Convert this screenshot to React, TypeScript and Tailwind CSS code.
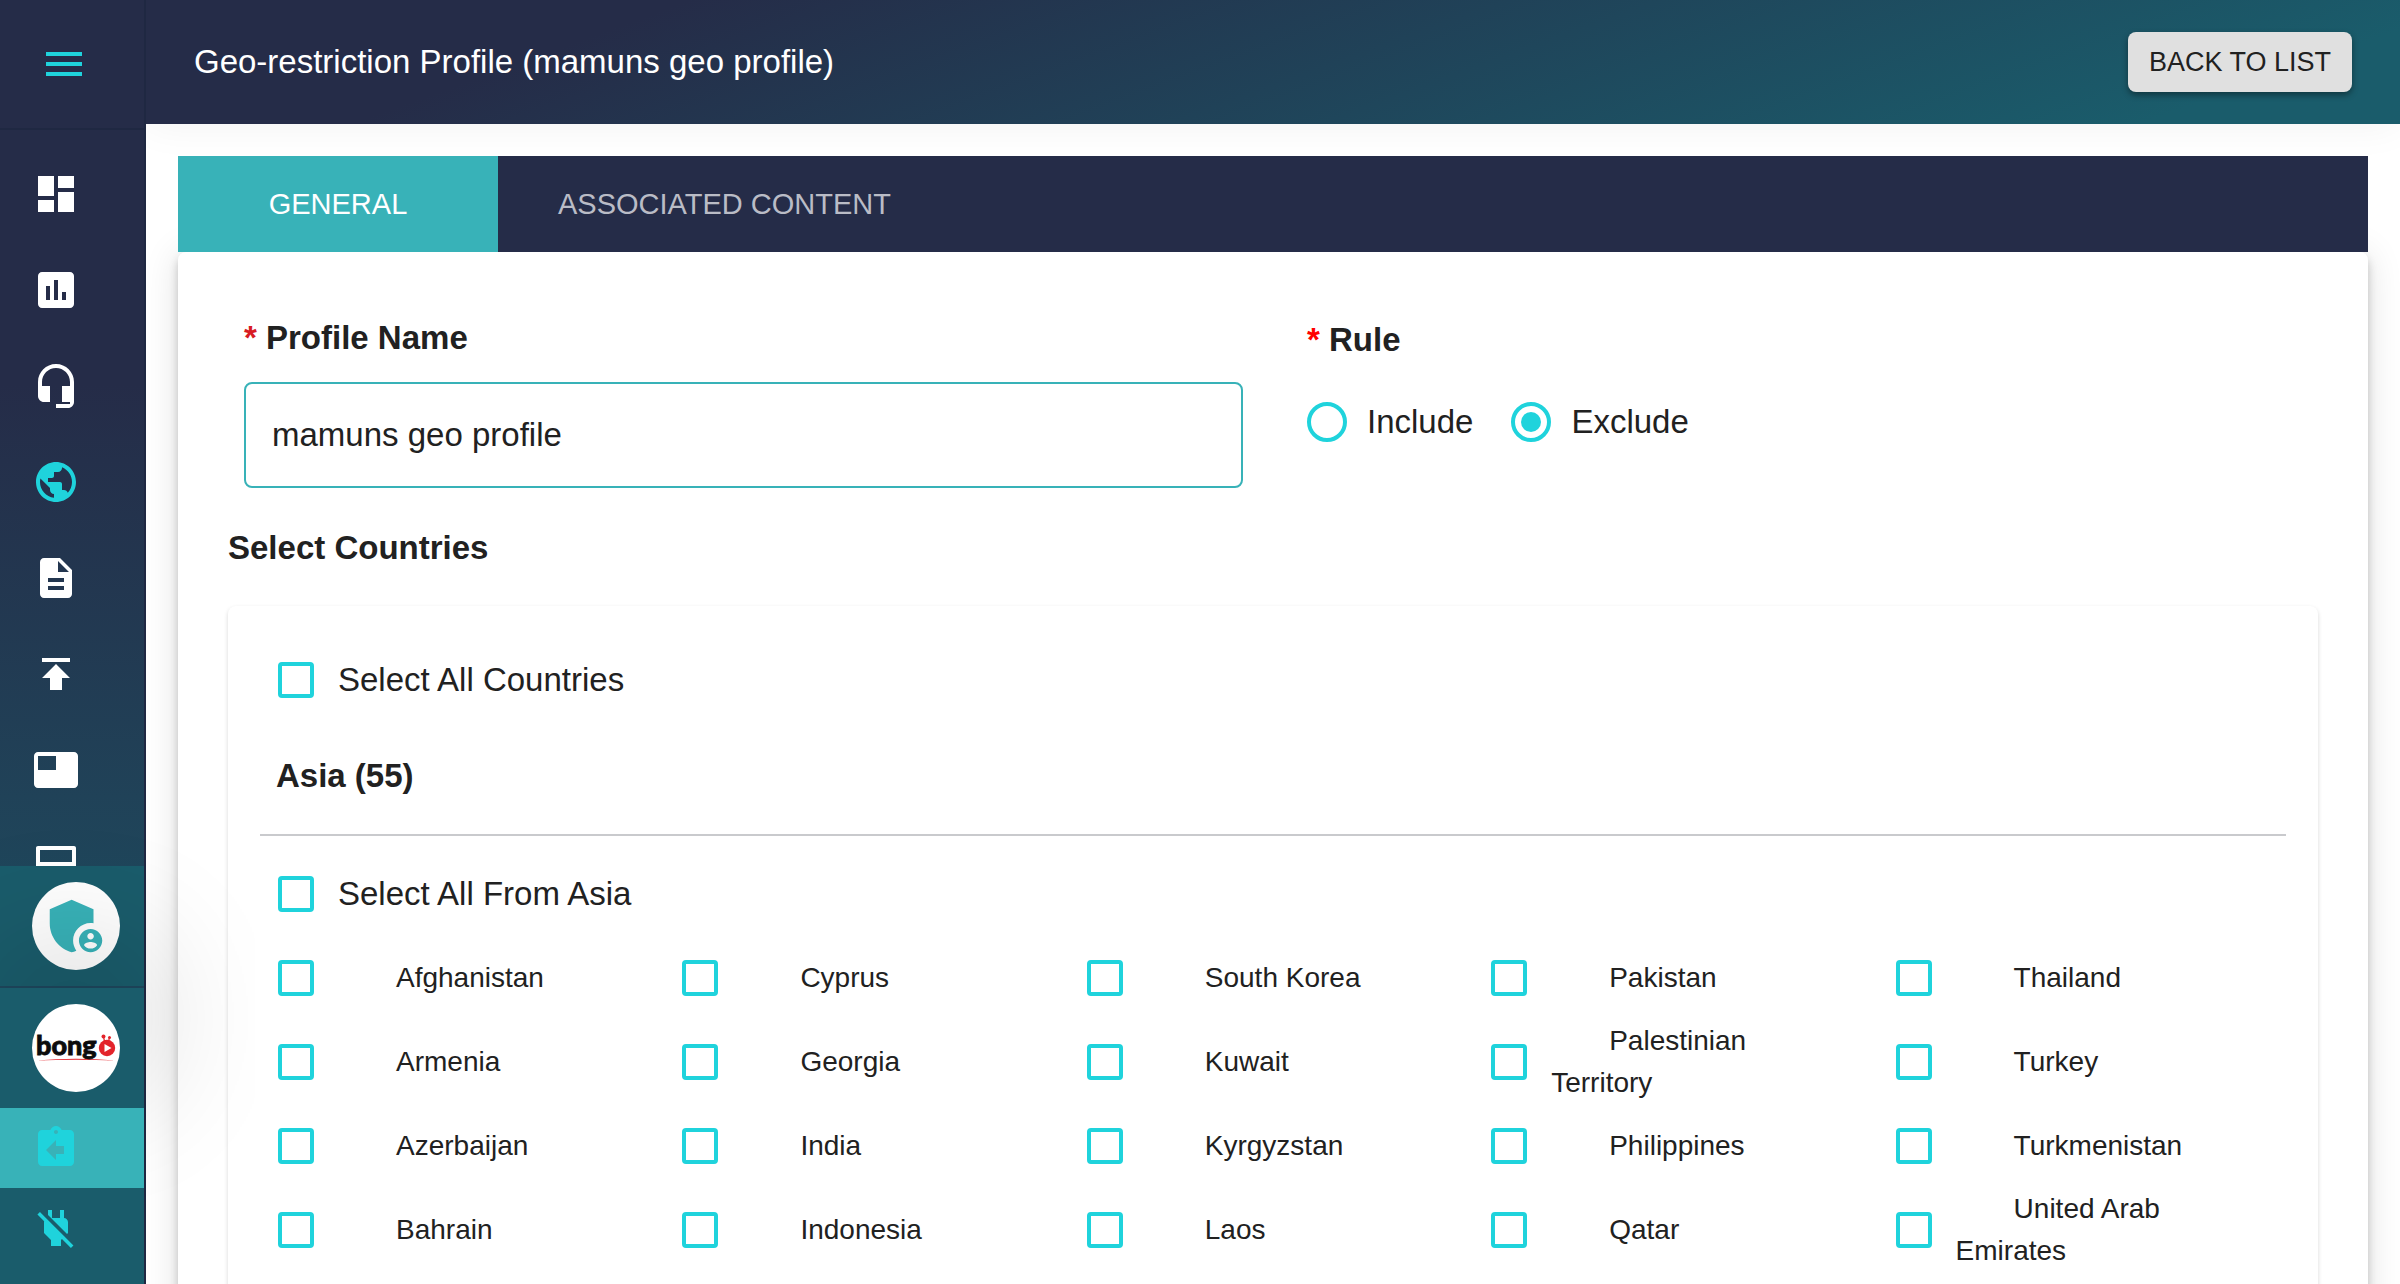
import React, { useState } from "react";

const ICONS = {
  menu: "M3 18h18v-2H3v2zm0-5h18v-2H3v2zm0-7v2h18V6H3z",
  dashboard: "M3 13h8V3H3v10zm0 8h8v-6H3v6zm10 0h8V11h-8v10zm0-18v6h8V3h-8z",
  assessment:
    "M19 3H5c-1.1 0-2 .9-2 2v14c0 1.1.9 2 2 2h14c1.1 0 2-.9 2-2V5c0-1.1-.9-2-2-2zM9 17H7v-7h2v7zm4 0h-2V7h2v10zm4 0h-2v-4h2v4z",
  headset:
    "M12 1c-4.97 0-9 4.03-9 9v7c0 1.66 1.34 3 3 3h3v-8H5v-2c0-3.87 3.13-7 7-7s7 3.13 7 7v2h-4v8h4v1h-7v2h6c1.66 0 3-1.34 3-3V10c0-4.97-4.03-9-9-9z",
  globe:
    "M12 2C6.48 2 2 6.48 2 12s4.48 10 10 10 10-4.48 10-10S17.52 2 12 2zm-1 17.93c-3.95-.49-7-3.85-7-7.93 0-.62.08-1.21.21-1.79L9 15v1c0 1.1.9 2 2 2v1.93zm6.9-2.54c-.26-.81-1-1.39-1.9-1.39h-1v-3c0-.55-.45-1-1-1H8v-2h2c.55 0 1-.45 1-1V7h2c1.1 0 2-.9 2-2v-.41c2.93 1.19 5 4.06 5 7.41 0 2.08-.8 3.97-2.1 5.39z",
  document:
    "M14 2H6c-1.1 0-1.99.9-1.99 2L4 20c0 1.1.89 2 1.99 2H18c1.1 0 2-.9 2-2V8l-6-6zm2 16H8v-2h8v2zm0-4H8v-2h8v2zm-3-5V3.5L18.5 9H13z",
  publish: "M5 4v2h14V4H5zm0 10h4v6h6v-6h4l-7-7-7 7z",
  featured:
    "M21 3H3c-1.1 0-2 .9-2 2v14c0 1.1.9 2 2 2h18c1.1 0 2-.9 2-2V5c0-1.1-.9-2-2-2zm-9 9H3V5h9v7z",
  panels:
    "M21 2H3c-.55 0-1 .45-1 1v9h20V3c0-.55-.45-1-1-1zm-1 8H4V4h16v6zM2 13v8c0 .55.45 1 1 1h18c.55 0 1-.45 1-1v-8H2zm18 7H4v-5h16v5z",
  shieldUser:
    "M17 11c.34 0 .67.04 1 .09V6.27L10.5 3 3 6.27v4.91c0 4.54 3.2 8.79 7.5 9.82.55-.13 1.08-.32 1.6-.55-.69-.98-1.1-2.17-1.1-3.45 0-3.31 2.69-6 6-6zM17 13c-2.21 0-4 1.79-4 4s1.79 4 4 4 4-1.79 4-4-1.79-4-4-4zm0 1.38c.62 0 1.12.51 1.12 1.12s-.51 1.12-1.12 1.12-1.12-.51-1.12-1.12.5-1.12 1.12-1.12zm0 5.37c-.93 0-1.74-.46-2.24-1.17.05-.72 1.51-1.08 2.24-1.08s2.19.36 2.24 1.08c-.5.71-1.31 1.17-2.24 1.17z",
  assignmentReturn:
    "M19 3h-4.18C14.4 1.84 13.3 1 12 1c-1.3 0-2.4.84-2.82 2H5c-1.1 0-2 .9-2 2v14c0 1.1.9 2 2 2h14c1.1 0 2-.9 2-2V5c0-1.1-.9-2-2-2zm-7 0c.55 0 1 .45 1 1s-.45 1-1 1-1-.45-1-1 .45-1 1-1zm4 12h-4v3l-5-5 5-5v3h4v4z",
  powerOff:
    "M18 14.49V9c0-1-1.01-2.01-2-2V3h-2v4h-4V3H8v2.48l9.51 9.5.49-.49zm-1.76 1.77L7.2 7.2l-.01.01L3.98 4 2.71 5.25l3.36 3.36C6.04 8.74 6 8.87 6 9v5.48L9.5 18v3h5v-3l.48-.48L19.45 22l1.26-1.28-4.47-4.46z",
};

type IconName = keyof typeof ICONS;

function Icon({ name, className = "size-12" }: { name: IconName; className?: string }) {
  return (
    <svg viewBox="0 0 24 24" className={className} fill="currentColor" aria-hidden="true">
      <path d={ICONS[name]} />
    </svg>
  );
}

function BongoLogo() {
  return (
    <svg viewBox="0 0 88 88" className="size-[88px]" role="img" aria-label="bongo">
      <path d="M4 56.500Q44 53 84 56.500Q44 55 4 56.500z" fill="#e3242b" />
      <text
        x="4"
        y="51"
        fontFamily="Lato, sans-serif"
        fontWeight="900"
        fontSize="27"
        fill="#0c0c0c"
        stroke="#0c0c0c"
        strokeWidth="0.800"
      >
        bong
      </text>
      <circle cx="75" cy="44" r="8.200" fill="#e3242b" />
      <path d="M72.500 40l7 4-7 4z" fill="#fff" />
      <circle cx="71.500" cy="32.500" r="2" fill="#e3242b" />
      <circle cx="77.500" cy="33.500" r="1.500" fill="#e3242b" />
      <path d="M71.500 33l1 4M77.500 34l-1 3" stroke="#e3242b" strokeWidth="1.200" />
    </svg>
  );
}

const NAV: { icon: IconName; label: string; active?: boolean }[] = [
  { icon: "dashboard", label: "Dashboard" },
  { icon: "assessment", label: "Reports" },
  { icon: "headset", label: "Support" },
  { icon: "globe", label: "Geo-restriction", active: true },
  { icon: "document", label: "Documents" },
  { icon: "publish", label: "Publish" },
  { icon: "featured", label: "Featured" },
  { icon: "panels", label: "Sections" },
];

function Sidebar() {
  return (
    <aside className="relative z-10 flex w-[146px] shrink-0 flex-col border-r-2 border-[#1f2842] bg-[linear-gradient(180deg,#252c48_30%,#1a5c6b_100%)]">
      <div className="flex h-[130px] shrink-0 items-center border-b-2 border-[#1f2842] pl-10">
        <button type="button" aria-label="Toggle menu" className="text-[#1fd3dc]">
          <Icon name="menu" />
        </button>
      </div>
      <nav className="min-h-0 flex-1 overflow-hidden pt-4">
        {NAV.map((item) => (
          <a
            key={item.icon}
            href="#"
            aria-label={item.label}
            className={
              item.active
                ? "flex h-24 items-center pl-8 text-[#1fd3dc]"
                : "flex h-24 items-center pl-8 text-white"
            }
          >
            <Icon name={item.icon} />
          </a>
        ))}
      </nav>
      <div className="shrink-0 bg-[#1a5c6b]">
        <div className="border-b-2 border-[#1e475d] py-4 pl-8">
          <button
            type="button"
            aria-label="Account"
            className="flex size-[88px] items-center justify-center rounded-full bg-white text-[#38b2b8]"
          >
            <Icon name="shieldUser" className="size-[70px]" />
          </button>
        </div>
        <div className="relative bg-[#1a5c6b] py-4 pl-8 shadow-[0_-30px_140px_rgba(0,0,0,0.2)]">
          <div className="size-[88px] overflow-hidden rounded-full bg-white">
            <BongoLogo />
          </div>
        </div>
        <div className="relative bg-[#1a5c6b] pb-4">
          <button
            type="button"
            aria-label="Switch account"
            className="flex w-full bg-[#38b2b8] py-4 pl-8 text-[#1fd3dc]"
          >
            <Icon name="assignmentReturn" />
          </button>
          <button
            type="button"
            aria-label="Log out"
            className="flex w-full py-4 pl-8 text-[#1fd3dc]"
          >
            <Icon name="powerOff" />
          </button>
        </div>
      </div>
    </aside>
  );
}

const CHECKBOX =
  "size-9 shrink-0 appearance-none rounded-[4px] border-4 border-[#1fd3dc] bg-white checked:bg-[#1fd3dc]";

const ROWS = [
  ["Afghanistan", "Cyprus", "South Korea", "Pakistan", "Thailand"],
  ["Armenia", "Georgia", "Kuwait", "Palestinian Territory", "Turkey"],
  ["Azerbaijan", "India", "Kyrgyzstan", "Philippines", "Turkmenistan"],
  ["Bahrain", "Indonesia", "Laos", "Qatar", "United Arab Emirates"],
];

function SelectAll({ label }: { label: string }) {
  return (
    <label className="flex items-center gap-6 pl-[18px] text-[33px] leading-[48px]">
      <input type="checkbox" className={CHECKBOX} />
      {label}
    </label>
  );
}

function RuleOption({
  label,
  checked,
  onChange,
}: {
  label: string;
  checked: boolean;
  onChange: () => void;
}) {
  return (
    <label className="flex items-center gap-5 text-[33px] leading-[48px]">
      <input
        type="radio"
        name="rule"
        checked={checked}
        onChange={onChange}
        className="grid size-10 appearance-none place-content-center rounded-full border-4 border-[#1fd3dc] before:size-5 before:rounded-full checked:before:bg-[#1fd3dc]"
      />
      {label}
    </label>
  );
}

export default function App() {
  const [name, setName] = useState("mamuns geo profile");
  const [rule, setRule] = useState("Exclude");

  return (
    <div className="flex h-screen overflow-hidden bg-white font-['Liberation_Sans',Arial,sans-serif] text-[#212121]">
      <Sidebar />
      <div className="flex min-w-0 flex-1 flex-col">
        <header className="flex shrink-0 items-center justify-between bg-[linear-gradient(160deg,#252c48_21%,#1a5c6b_90%)] py-8 pr-12 pl-12 shadow-[0_0_40px_rgba(0,0,0,0.06)]">
          <h1 className="text-[33px] leading-[48px] text-white">
            Geo-restriction Profile (mamuns geo profile)
          </h1>
          <button
            type="button"
            className="rounded-lg bg-[#e0e0e0] px-[21px] text-[27px] leading-[60px] shadow-[0_3px_6px_rgba(0,0,0,0.4)]"
          >
            BACK TO LIST
          </button>
        </header>

        <main className="min-h-0 flex-1 p-8">
          <div role="tablist" className="relative flex h-24 bg-[#252c48] text-[29px]">
            <button
              type="button"
              role="tab"
              aria-selected="true"
              className="w-80 bg-[#38b2b8] pt-0.5 text-white"
            >
              GENERAL
            </button>
            <button
              type="button"
              role="tab"
              aria-selected="false"
              className="px-[60px] pt-0.5 text-[#babcc6]"
            >
              ASSOCIATED CONTENT
            </button>
          </div>

          <section className="rounded-lg bg-white px-[50px] pt-[62px] pb-24 shadow-[0_6px_10px_rgba(0,0,0,0.2),0_2px_36px_rgba(0,0,0,0.12)]">
            <div className="grid grid-cols-2 gap-16 pr-3 pl-4">
              <div className="flex flex-col gap-5">
                <label htmlFor="profile-name" className="text-[33px] leading-[48px] font-bold">
                  <span className="text-[#d81b23]">*</span> Profile Name
                </label>
                <input
                  id="profile-name"
                  type="text"
                  value={name}
                  onChange={(e) => setName(e.target.value)}
                  className="h-[106px] w-full rounded-lg border-2 border-[#38b2b8] px-[26px] text-[33px] outline-none"
                />
              </div>
              <fieldset>
                <legend className="text-[33px] leading-[52px] font-bold">
                  <span className="text-[#ff0000]">*</span> Rule
                </legend>
                <div className="mt-8 flex gap-[38px]">
                  {["Include", "Exclude"].map((option) => (
                    <RuleOption
                      key={option}
                      label={option}
                      checked={rule === option}
                      onChange={() => setRule(option)}
                    />
                  ))}
                </div>
              </fieldset>
            </div>

            <h2 className="mt-9 text-[33px] leading-[48px] font-bold">Select Countries</h2>

            <div className="mt-[34px] rounded-lg bg-white px-8 pt-[50px] pb-12 shadow-[0_2px_4px_rgba(0,0,0,0.16)]">
              <SelectAll label="Select All Countries" />
              <h3 className="mt-12 pl-4 text-[33px] leading-[48px] font-bold">Asia (55)</h3>
              <hr className="mt-[34px] mb-[34px] border-t-2 border-[#c9cacd]" />
              <SelectAll label="Select All From Asia" />
              <div className="mt-[18px] mr-1 grid grid-cols-5">
                {ROWS.flat().map((country) => (
                  <label
                    key={country}
                    className="flex h-[84px] items-center gap-6 pr-8 pl-[18px] text-[28px] leading-[42px]"
                  >
                    <input type="checkbox" className={CHECKBOX} />
                    <span className="indent-[58px]">{country}</span>
                  </label>
                ))}
              </div>
            </div>
          </section>
        </main>
      </div>
    </div>
  );
}
